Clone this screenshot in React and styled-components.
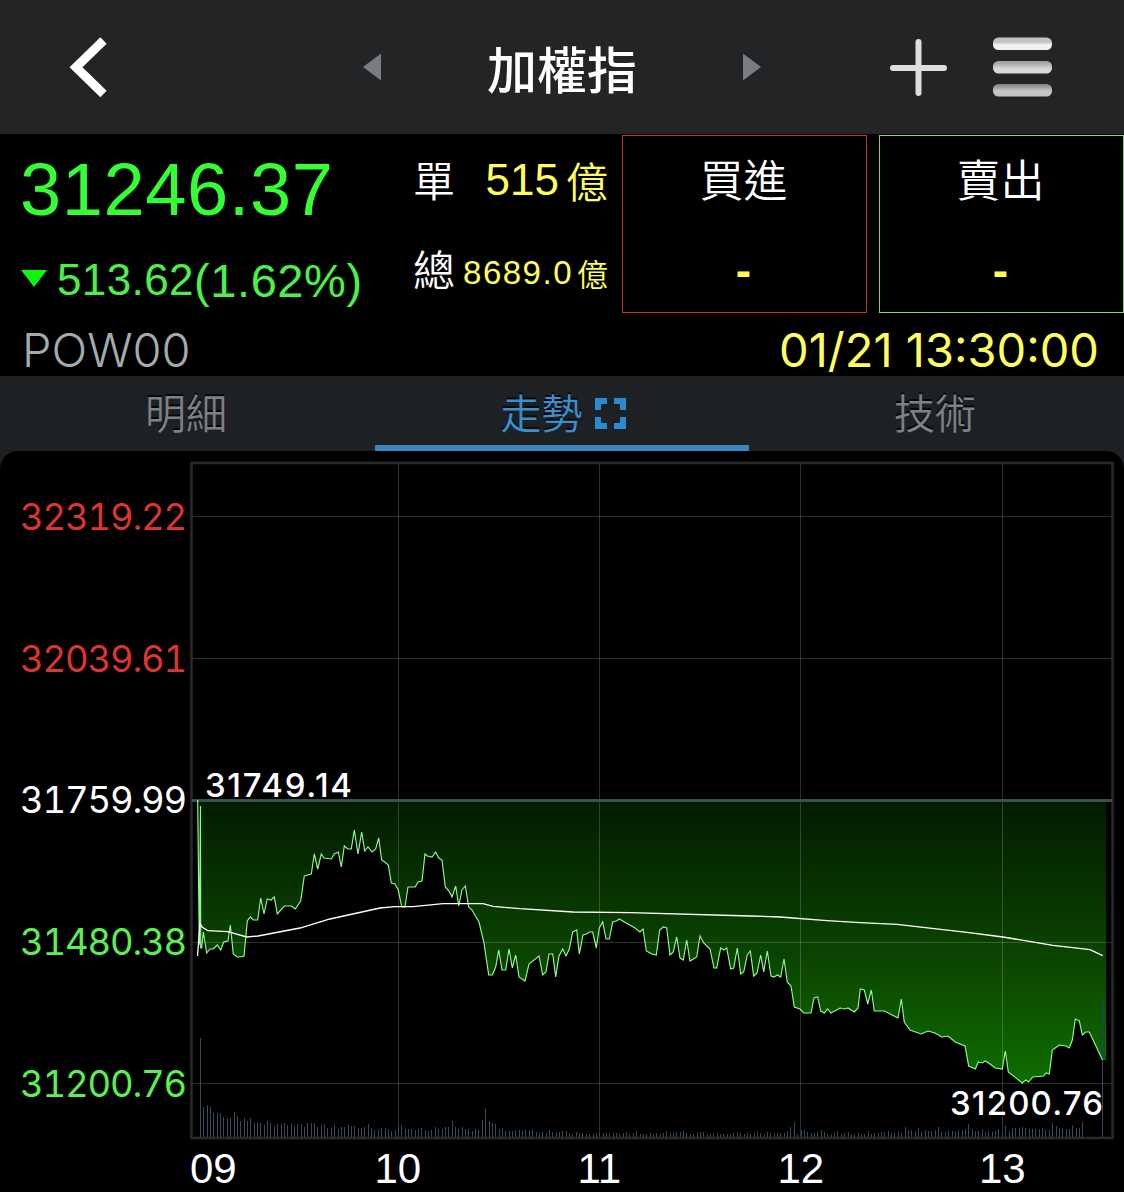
import React from "react";
import styled, { createGlobalStyle } from "styled-components";

const HELVETICA = `"Liberation Sans", "Noto Sans CJK TC", sans-serif`;
const INTER = `Inter, "Noto Sans CJK TC", sans-serif`;
const CJK = `"Noto Sans CJK TC", sans-serif`;

const GlobalStyle = createGlobalStyle`
	* {
		box-sizing: border-box;
	}

	body {
		margin: 0;
		background: #000;
		overflow: hidden;
	}
`;

const Page = styled.div`
	width: 1124px;
	height: 1192px;
	background: #000;
	color: #fff;
	font-family: ${HELVETICA};
	white-space: nowrap;
`;

const Label = styled.span`
	display: block;
	color: ${p => p.color || "#fff"};
	font-family: ${p => p.font || HELVETICA};
	font-size: ${p => p.size}px;
	font-weight: ${p => p.weight || 400};
	font-variant-numeric: ${p => (p.tabular ? "tabular-nums" : "normal")};
	letter-spacing: ${p => p.spacing || 0}px;
	line-height: ${p => p.line || p.size}px;
`;

/* ---------- title bar ---------- */

const TopBar = styled.header`
	display: flex;
	align-items: center;
	height: 134px;
	padding: 0 71px 0 69px;
	background: #222426;
`;

const Switcher = styled.div`
	display: flex;
	flex: 1;
	align-items: center;
	justify-content: space-between;
	margin: 0 129px 0 254px;
`;

const Actions = styled.div`
	display: flex;
	align-items: center;
	gap: 45px;
`;

const Icon = styled.svg`
	display: block;
	flex: none;
`;

/* ---------- quote ---------- */

const Quote = styled.section`
	display: grid;
	grid-template-columns: 392px 216px 245px 245px;
	column-gap: 0;
	height: 180px;
	padding-top: 1px;
`;

const Price = styled.div`
	padding: 18px 0 0 20px;
`;

const Change = styled.div`
	display: flex;
	align-items: center;
	margin-top: 29px;
	height: 48px;
`;

const Arrow = styled.svg`
	display: block;
	margin: 0 10px 4px 1px;
`;

const Volumes = styled.div`
	padding: 21px 0 0 21px;
`;

const VolumeRow = styled.div`
	display: flex;
	align-items: center;
	height: 46px;
	margin-bottom: 43px;
`;

const VolumeValue = styled.div`
	display: flex;
	flex: 1;
	align-items: center;
	justify-content: flex-end;
	gap: ${p => p.gap}px;
	padding-top: ${p => p.drop || 0}px;
`;

const OrderBox = styled.div`
	display: flex;
	flex-direction: column;
	align-items: center;
	width: 245px;
	height: 178px;
	margin-left: ${p => p.offset}px;
	padding: 17px 2px 0 0;
	border: 1px solid ${p => p.edge};
`;

const Dash = styled(Label)`
	margin-top: 44px;
`;

const InfoRow = styled.div`
	display: flex;
	align-items: center;
	justify-content: space-between;
	height: 62px;
	padding: 8px 25px 0 22px;
`;

/* ---------- tabs ---------- */

const Lower = styled.div`
	background: #1d2124;
`;

const Tabs = styled.nav`
	display: flex;
	height: 75px;
`;

const Tab = styled.div`
	display: flex;
	flex: 1;
	justify-content: center;
	gap: 12px;
	padding: 15px 3px 0 0;
	border-bottom: 6px solid ${p => (p.active ? "#3b87bd" : "transparent")};
	text-shadow: 0 -2px 0 #03080d;

	&:nth-child(2) {
		padding: 15px 0 0 2px;
	}

	svg {
		margin-top: 7px;
	}
`;

/* ---------- chart ---------- */

const Panel = styled.main`
	height: 741px;
	border-radius: 18px 18px 0 0;
	background: #000;
`;

const ChartRow = styled.div`
	display: flex;
	height: 692px;
`;

const Scale = styled.div`
	width: 190px;
	margin-top: -4px;
	padding: 0 4px 0 0;
	text-align: right;
`;

const Plot = styled.svg`
	display: block;
	width: 934px;
	height: 692px;
`;

const Hours = styled.div`
	display: grid;
	grid-template-columns: 107px repeat(4, 201.5px);
	padding: 5px 0 0 190px;

	span + span {
		text-align: center;
	}
`;

const scale = [
	{ value: "32319.22", color: "#dc3430" },
	{ value: "32039.61", color: "#dc3430" },
	{ value: "31759.99", color: "#fff" },
	{ value: "31480.38", color: "#5bef52" },
	{ value: "31200.76", color: "#5bef52" }
];

const pricePoints =
	"197.7,800 199.3,945 200.5,806 200.7,948 201.7,948 203.3,932 206.7,953 210,949 213.3,949 217.3,945 220.7,950 223.7,942 228,941 230.3,925 233.3,954 237.3,957 240,957 244,956 247.3,921 250.3,917 253.3,920 257.7,920 260.7,898 264,914 267.3,899 271,900 274.3,897 277.3,914 284.3,906 291.3,906 295.3,909 300.7,901 304.3,876 311.3,874 314.3,854 317.7,869 321.3,854 324,858 331.3,859 334.3,854 338.3,852 341.3,867 344.3,846 347.7,849 351.3,849 354.3,830 358,854 361.7,832 364.7,851 368,847 372,852 375.7,849 378.7,838 381.7,860 384.7,862 388.3,865 391.3,883 395,884 398.3,890 401.7,907 405,907 408,887 415.3,887 418,882 422,881 425,854 427.3,856 432,857 435.7,852 438.7,858 442,860 445.3,887 449,891 452,897 455.7,886 458.7,906 462,890 465.3,886 468.7,907 472,910 479,922 484,943 488.7,975 492.3,975 495.7,967 498.7,950 502,970 505.7,970 509,949 512.3,968 515.7,955 519,977 525,981 529,964 539,956 542.7,975 546,972 549,954 552.7,954 555.7,977 559,956 562.7,949 566,956 569.3,949 572.7,932 576.7,930 579.3,954 583,935 586.7,934 589.3,932 592.7,932 596.3,948 599.3,928 602.7,922 606,939 609.3,939 612.7,922 616.3,921 619.3,919 628,924 635,928 640,932 643,929 646.3,951 652,954 656.3,955 659.7,930 663.3,927 666.7,928 670,955 673.3,952 676.7,937 680,958 683.3,960 686.7,940 690,961 696.7,957 700,936 703.7,943 710,949 714,968 716.7,968 720.7,948 723.7,950 726.7,948 730.7,969 733.7,968 737.3,948 740.7,974 743.7,972 747.3,955 750.3,951 753.7,976 757,973 760.7,955 763.7,972 767.3,951 771,976 774,977 777.3,975 780.7,977 784,959 787.3,982 791,986 794.3,1007 800,1009 803.7,1013 811,1013 814,998 817.7,997 820.7,1011 824.3,1013 827.7,1009 831,1013 840,1008 845,1009 848,1008 854.3,1012 858,1008 860.3,989 864.3,990 867.7,1004 871.3,990 874.3,1011 884.3,1011 898,1018 901.3,999 904.3,1022 910,1030 921,1034 928,1031 935,1033 941.7,1037 948,1036 955.3,1042 965,1046 968.7,1066 975.3,1069 978.3,1062 982.3,1063 985.3,1061 990,1064 995.3,1068 1002.3,1069 1005.3,1051 1008.3,1072 1022.3,1083 1025.7,1080 1028.7,1082 1032.7,1077 1043.7,1076 1046,1073 1049.3,1074 1052.3,1050 1059.3,1045 1066,1046 1069.3,1048 1072.3,1040 1075.3,1019 1079.3,1021 1082.3,1035 1085.7,1032 1089.3,1032 1102.5,1060";

const averagePoints =
	"197.5,956 200,923 202,927 208,930.7 228,931.7 246.7,937 258,936 300,928 330,919 380,908 395,906.7 413,906.7 443,903.7 483,903.7 493,906.3 520,908.7 573,912 630,912.7 750,916 780,917 827,920.7 860,922.7 897,924.3 967,932.3 1003,937 1053,945.3 1090,949.7 1102.7,955.7";

// one bar per trading minute, height in px
const volumes = [
	99, 30, 32, 30, 24, 24, 24, 20, 19, 19, 25, 21, 16, 19, 16, 19, 14, 14, 14, 12,
	16, 14, 11, 13, 13, 14, 12, 13, 11, 13, 13, 10, 14, 14, 14, 10, 12, 13, 9, 9,
	12, 8, 10, 10, 12, 11, 11, 8, 9, 10, 13, 9, 7, 7, 9, 9, 8, 6, 7, 13,
	12, 8, 8, 8, 7, 8, 9, 7, 6, 7, 10, 8, 8, 10, 10, 16, 10, 8, 10, 8,
	8, 6, 8, 7, 17, 28, 16, 14, 13, 8, 9, 6, 6, 6, 7, 7, 6, 7, 7, 8,
	5, 4, 5, 4, 7, 5, 4, 5, 6, 6, 4, 3, 5, 4, 4, 3, 3, 3, 4, 5,
	4, 4, 3, 4, 4, 3, 4, 5, 3, 4, 6, 3, 3, 3, 4, 3, 4, 3, 4, 6,
	4, 4, 5, 5, 6, 4, 3, 3, 4, 5, 5, 3, 3, 3, 4, 3, 3, 3, 3, 4,
	5, 4, 3, 4, 3, 4, 5, 4, 3, 5, 4, 3, 4, 4, 4, 6, 10, 15, 3, 7,
	7, 5, 4, 4, 5, 7, 5, 3, 3, 4, 6, 3, 4, 5, 3, 3, 4, 3, 3, 6,
	3, 4, 4, 5, 5, 6, 4, 4, 5, 4, 10, 7, 7, 6, 9, 5, 7, 6, 6, 7,
	10, 5, 5, 6, 6, 5, 7, 7, 8, 13, 8, 6, 6, 8, 5, 6, 5, 6, 8, 5,
	11, 6, 9, 9, 9, 10, 9, 8, 8, 8, 8, 9, 7, 7, 14, 11, 9, 8, 8, 8,
	12, 9, 9, 15
];

const Chart = () => (
	<Plot viewBox="190 451 934 692">
		<defs>
			<linearGradient id="fall" gradientUnits="userSpaceOnUse" x1="0" y1="801" x2="0" y2="1083">
				<stop offset="0" stopColor="#021b00" />
				<stop offset="0.5" stopColor="#0a4000" />
				<stop offset="1" stopColor="#106c00" />
			</linearGradient>
		</defs>
		<polygon points={`${pricePoints} 1106,1060 1106,801 198,801`} fill="url(#fall)" />
		<g stroke="#fff" strokeOpacity="0.18" shapeRendering="crispEdges">
			{[398.5, 599.5, 800.5, 1002.5].map(x => (
				<line key={x} x1={x} x2={x} y1="464" y2="1137" />
			))}
			{[516.5, 658.5, 942.5, 1083.5].map(y => (
				<line key={y} x1="192" x2="1112" y1={y} y2={y} />
			))}
		</g>
		<rect x="191.5" y="463" width="921" height="675" fill="none" stroke="#292929" strokeWidth="2.6" />
		<g fill="#344c5d" shapeRendering="crispEdges">
			{volumes.map((h, i) => (
				<rect key={i} x={Math.round(200 + i * 3.355)} y={1137 - h} width="1" height={h} />
			))}
			<rect x="1102" y="1060" width="1" height="77" />
		</g>
		<rect x="1102" y="1001" width="2" height="59" fill="#12503a" />
		<line x1="192" x2="1112" y1="800.5" y2="800.5" stroke="#36524f" strokeWidth="3" />
		<polyline points={pricePoints} fill="none" stroke="#8cff88" strokeWidth="1.15" />
		<polyline points={averagePoints} fill="none" stroke="#fff" strokeWidth="1.3" />
		<g fill="#fff" fontFamily="Inter, sans-serif" fontSize="33" fontWeight="500">
			<text x="205" y="797" textLength="147">31749.14</text>
			<text x="950" y="1115" textLength="153">31200.76</text>
		</g>
	</Plot>
);

const App = () => (
	<Page>
		<GlobalStyle />
		<TopBar>
			<Icon width="40" height="62" viewBox="0 0 40 62">
				<path d="M34.5 4.5L7 31.3L34.5 58" fill="none" stroke="#fff" strokeWidth="9" />
			</Icon>
			<Switcher>
				<Icon width="18" height="28" viewBox="0 0 18 28">
					<path d="M18 0.5V27.5L0 14z" fill="#777d80" />
				</Icon>
				<Label font={CJK} size={50} weight={500} line={58}>加權指</Label>
				<Icon width="18" height="28" viewBox="0 0 18 28">
					<path d="M0 0.5V27.5L18 14z" fill="#777d80" />
				</Icon>
			</Switcher>
			<Actions>
				<Icon width="57" height="58" viewBox="0 0 57 58">
					<path d="M28.5 4V55M3 30H54" stroke="#dedede" strokeWidth="6" strokeLinecap="round" />
				</Icon>
				<Icon width="61" height="62" viewBox="0 0 61 62">
					<defs>
						<linearGradient id="bar1" x2="0" y2="1">
							<stop offset="0.35" stopColor="#c4c4c4" />
							<stop offset="0.6" stopColor="#f3f3f3" />
						</linearGradient>
						<linearGradient id="bar2" x2="0" y2="1">
							<stop offset="0.1" stopColor="#a2a2a3" />
							<stop offset="0.65" stopColor="#d9d9da" />
						</linearGradient>
						<linearGradient id="bar3" x2="0" y2="1">
							<stop offset="0.05" stopColor="#868688" />
							<stop offset="0.55" stopColor="#c5c5c7" />
						</linearGradient>
					</defs>
					<rect x="1" y="1.5" width="59" height="12.5" rx="5.5" fill="url(#bar1)" />
					<rect x="1" y="25" width="59" height="12.5" rx="5.5" fill="url(#bar2)" />
					<rect x="1" y="48" width="59" height="12.5" rx="5.5" fill="url(#bar3)" />
				</Icon>
			</Actions>
		</TopBar>

		<Quote>
			<Price>
				<Label size={74} spacing={0.6} color="#33ff33">31246.37</Label>
				<Change>
					<Arrow width="26" height="17" viewBox="0 0 26 17">
						<path d="M0 0H26L13 17z" fill="#11f411" />
					</Arrow>
					<Label size={44} spacing={0.4} color="#4df04a">513.62</Label>
					<Label size={47} spacing={0.6} color="#4df04a">(1.62%)</Label>
				</Change>
			</Price>
			<Volumes>
				<VolumeRow>
					<Label font={CJK} size={42} weight={350}>單</Label>
					<VolumeValue gap={7} drop={1}>
						<Label size={44} line={42} color="#ffff5c">515</Label>
						<Label font={CJK} size={42} line={40} weight={350} color="#ffff5c">億</Label>
					</VolumeValue>
				</VolumeRow>
				<VolumeRow>
					<Label font={CJK} size={42} weight={350}>總</Label>
					<VolumeValue gap={4} drop={8}>
						<Label size={33} spacing={1.5} color="#ffff5c">8689.0</Label>
						<Label font={CJK} size={31} weight={350} color="#ffff5c">億</Label>
					</VolumeValue>
				</VolumeRow>
			</Volumes>
			<OrderBox edge="#c23434" offset={14}>
				<Label font={CJK} size={44} weight={350} line={50}>買進</Label>
				<Dash size={46} weight={700} color="#ffff4d">-</Dash>
			</OrderBox>
			<OrderBox edge="#7fd873" offset={26}>
				<Label font={CJK} size={44} weight={350} line={50}>賣出</Label>
				<Dash size={46} weight={700} color="#ffff4d">-</Dash>
			</OrderBox>
		</Quote>
		<InfoRow>
			<Label font={INTER} size={47} weight={300} color="#a3abad">POW00</Label>
			<Label font={INTER} size={47} weight={400} color="#ffff5c">01/21 13:30:00</Label>
		</InfoRow>

		<Lower>
			<Tabs>
				<Tab>
					<Label font={CJK} size={41} weight={350} color="#7e8183">明細</Label>
				</Tab>
				<Tab active>
					<Label font={CJK} size={41} weight={350} color="#3b8fcb">走勢</Label>
					<Icon width="31" height="31" viewBox="0 0 31 31">
						<path
							d="M3 12V3H12M19 3H28V12M28 19V28H19M12 28H3V19"
							fill="none"
							stroke="#278ccf"
							strokeWidth="6"
						/>
					</Icon>
				</Tab>
				<Tab>
					<Label font={CJK} size={41} weight={350} color="#7e8183">技術</Label>
				</Tab>
			</Tabs>
			<Panel>
				<ChartRow>
					<Scale>
						{scale.map(row => (
							<Label key={row.value} tabular font={INTER} size={36.5} spacing={-1.2} line={141.7} color={row.color}>
								{row.value}
							</Label>
						))}
					</Scale>
					<Chart />
				</ChartRow>
				<Hours>
					{["09", "10", "11", "12", "13"].map(hour => (
						<Label key={hour} size={42}>{hour}</Label>
					))}
				</Hours>
			</Panel>
		</Lower>
	</Page>
);

export default App;
